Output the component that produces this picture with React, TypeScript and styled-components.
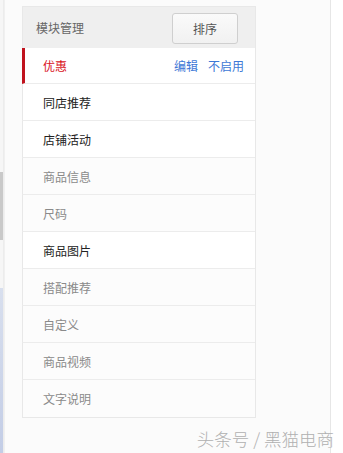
import React, { FC } from "react";
import styled, { createGlobalStyle } from "styled-components";

interface ModuleItem {
  name: string;
  enabled: boolean;
}

const modules: ModuleItem[] = [
  { name: "同店推荐", enabled: true },
  { name: "店铺活动", enabled: true },
  { name: "商品信息", enabled: false },
  { name: "尺码", enabled: false },
  { name: "商品图片", enabled: true },
  { name: "搭配推荐", enabled: false },
  { name: "自定义", enabled: false },
  { name: "商品视频", enabled: false },
  { name: "文字说明", enabled: false },
];

const GlobalStyle = createGlobalStyle`
  html, body {
    margin: 0;
    padding: 0;
    background: #ffffff;
    font-family: "Noto Sans CJK SC", "Noto Sans", sans-serif;
  }
  * {
    box-sizing: border-box;
  }
`;

const App: FC = () => {
  return (
    <>
      <GlobalStyle />
      <Page>
        <EdgeStrip />
        <Panel>
          <Card>
            <Header>
              <HeaderTitle>模块管理</HeaderTitle>
              <SortButton type="button">排序</SortButton>
            </Header>
            <ActiveRow>
              <ActiveName>优惠</ActiveName>
              <Actions>
                <ActionLink href="#">编辑</ActionLink>
                <ActionLink href="#">不启用</ActionLink>
              </Actions>
            </ActiveRow>
            {modules.map((item) => (
              <Row key={item.name} enabled={item.enabled}>
                <RowName enabled={item.enabled}>{item.name}</RowName>
              </Row>
            ))}
          </Card>
          <Footer>
            <Watermark>头条号 / 黑猫电商</Watermark>
          </Footer>
        </Panel>
      </Page>
    </>
  );
};

export default App;

const Page = styled.div`
  display: flex;
  width: 343px;
  height: 453px;
  overflow: hidden;
  background: #ffffff;
`;

const EdgeStrip = styled.div`
  width: 4px;
  flex-shrink: 0;
  border-right: 1px solid #ececec;
  background: linear-gradient(
    to bottom,
    #f6f6f6 0px,
    #f6f6f6 172px,
    #c9c9c9 172px,
    #c9c9c9 240px,
    #f6f6f6 240px,
    #f6f6f6 288px,
    #d8dfee 288px,
    #c3cde6 453px
  );
`;

const Panel = styled.div`
  width: 327px;
  flex-shrink: 0;
  display: flex;
  flex-direction: column;
  padding: 6px 0 0 17px;
  background: #fbfbfb;
  border-left: 1px solid #f0f0f0;
  border-right: 1px solid #e6e6e6;
`;

const Card = styled.div`
  width: 234px;
  display: flex;
  flex-direction: column;
  border: 1px solid #e8e8e8;
  border-left: none;
  background: #ffffff;
`;

const Header = styled.div`
  height: 41px;
  display: flex;
  align-items: center;
  justify-content: space-between;
  padding: 0 17px 0 13px;
  background: #efefef;
  border-left: 1px solid #e8e8e8;
`;

const HeaderTitle = styled.span`
  font-size: 12px;
  color: #666666;
`;

const SortButton = styled.button`
  width: 66px;
  height: 31px;
  margin-top: 2px;
  border: 1px solid #cfcfcf;
  border-radius: 3px;
  background: linear-gradient(to bottom, #fafafa, #f1f1f1);
  font-family: "Noto Sans CJK SC", "Noto Sans", sans-serif;
  font-size: 12px;
  color: #555555;
  padding: 0;
`;

const RowBase = styled.div`
  height: 37px;
  display: flex;
  align-items: center;
  padding: 0 11px 0 20px;
`;

const ActiveRow = styled(RowBase)`
  height: 36px;
  justify-content: space-between;
  border-left: 3px solid #c0121d;
  padding-left: 18px;
  border-bottom: 1px solid #ececec;
`;

const ActiveName = styled.span`
  font-size: 12px;
  color: #d9141e;
`;

const Actions = styled.div`
  display: flex;
  gap: 10px;
`;

const ActionLink = styled.a`
  font-size: 12px;
  color: #3d78d6;
  text-decoration: none;
`;

const Row = styled(RowBase)<{ enabled: boolean }>`
  border-left: 1px solid #e8e8e8;
  background: ${(p) => (p.enabled ? "#ffffff" : "#fcfcfc")};
  border-bottom: 1px solid #ececec;
  &:last-child {
    border-bottom: none;
  }
`;

const RowName = styled.span<{ enabled: boolean }>`
  font-size: 12px;
  color: ${(p) => (p.enabled ? "#222222" : "#8a8a8a")};
`;

const Footer = styled.div`
  display: flex;
  justify-content: flex-end;
  padding-top: 8px;
  margin-right: -4px;
`;

const Watermark = styled.span`
  font-size: 17.5px;
  font-weight: 300;
  color: #b0b0b0;
  white-space: nowrap;
`;
